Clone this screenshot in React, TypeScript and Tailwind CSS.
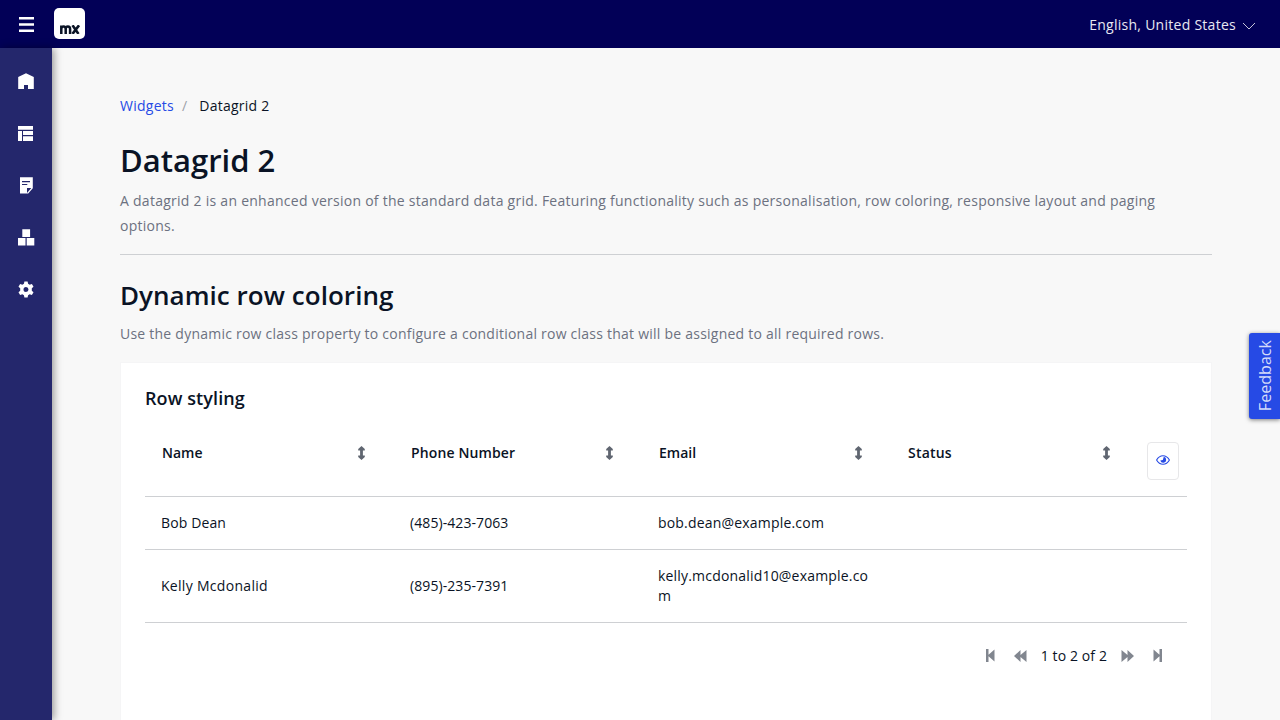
import type { ReactNode } from "react";

const columns = [
  { label: "Name", tracking: "" },
  { label: "Phone Number", tracking: "pl-[0.5px] tracking-[0.13px]" },
  { label: "Email", tracking: "" },
  { label: "Status", tracking: "pl-[0.5px] tracking-[0.2px]" },
];

const rows = [
  { name: "Bob Dean", tracking: "tracking-[0.12px]", phone: "(485)-423-7063", email: "bob.dean@example.com", status: "" },
  { name: "Kelly Mcdonalid", tracking: "tracking-[0.3px]", phone: "(895)-235-7391", email: "kelly.mcdonalid10@example.com", status: "" },
];

function NavItem({ label, children }: { label: string; children: ReactNode }) {
  return (
    <a href="#" aria-label={label} className="flex h-[52px] items-center justify-center text-white">
      <svg width="18" height="18" viewBox="0 0 18 18" fill="currentColor">
        {children}
      </svg>
    </a>
  );
}

function Sidebar() {
  return (
    <nav className="z-10 w-[52px] shrink-0 bg-[#24276c] pt-[7px] shadow-[2px_0_8px_rgba(0,0,0,0.4)]">
      <NavItem label="Home">
        <path d="M9 1.300 1.200 5V17H7v-4h4v4h5.800V5Z" />
      </NavItem>
      <NavItem label="Layout">
        <path d="M1 2h15v3.700H1ZM1 7h4v10H1ZM6 7h10v3.900H6ZM6 12.200h10V17H6Z" />
      </NavItem>
      <NavItem label="Notes">
        <path fillRule="evenodd" d="M3 1.200h12.800v11L11.200 17.500H3ZM5 5v1.200h8V5ZM5 7.900v1.200h5.300V7.900ZM10 12v5l4.300-5Z" />
      </NavItem>
      <NavItem label="Widgets">
        <path d="M5.300 1.300h7.800V9H5.300ZM1 10h7.500v7.500H1ZM9.700 10h7.600v7.500H9.700Z" />
      </NavItem>
      <NavItem label="Settings">
        <path
          transform="translate(0 .5)"
          fillRule="evenodd"
          d="M7.400 1h3.200l.5 2.300 1.500.9 2.300-.8 1.600 2.800-1.700 1.600v2.400l1.700 1.600-1.600 2.800-2.300-.8-1.500.9-.5 2.300H7.400l-.5-2.300-1.500-.9-2.300.8-1.600-2.800 1.700-1.600V7.800L1.500 6.200l1.600-2.800 2.300.8 1.500-.9ZM9 6.500a2.500 2.500 0 1 0 0 5 2.500 2.500 0 0 0 0-5Z"
        />
      </NavItem>
    </nav>
  );
}

function TopBar() {
  return (
    <header className="flex h-12 shrink-0 items-center bg-[#020057] text-[#e8e8f2]">
      <button aria-label="Toggle menu" className="flex w-[53px] items-center justify-center">
        <svg width="15" height="15" viewBox="0 0 15 15" fill="#fff">
          <path d="M0 0h15v2.400H0ZM0 6.300h15v2.400H0ZM0 12.600h15V15H0Z" />
        </svg>
      </button>
      <div className="-mt-px ml-px flex h-[31px] w-[31px] items-center justify-center rounded-[5px] bg-white">
        <svg width="20" height="9" viewBox="0 0 20 9" fill="none" stroke="#0a1325" className="mt-[11px]">
          <path strokeWidth="2.500" d="M1.300 9V.5M1.300 9V4Q1.300 1.500 3.500 1.500T5.700 4V9M5.700 9V4Q5.700 1.500 7.900 1.500T10.100 4V9" />
          <path strokeWidth="2.600" d="m12.500 .3 6 8.600M19 .3 12.500 8.900" />
        </svg>
      </div>
      <div className="mr-6 ml-auto flex items-center gap-[6px] pt-0.5 text-sm tracking-[0.27px]">
        English, United States
        <svg width="14" height="8" viewBox="0 0 14 8" fill="none" stroke="#c3c3d8" className="mt-px">
          <path d="m1 1 6 6 6-6" />
        </svg>
      </div>
    </header>
  );
}

function SortIcon() {
  return (
    <svg width="7" height="14" viewBox="0 0 7 14" fill="#606671" className="shrink-0">
      <path d="M3.500 0 6.800 3v1.500H4.900v5h1.900V11L3.500 14 .2 11V9.500h1.900v-5H.2V3Z" />
    </svg>
  );
}

function EyeIcon() {
  return (
    <svg width="14" height="10" viewBox="0 0 14 10" fill="none" className="mb-0.5">
      <path d="M.6 5Q3 .7 7 .7T13.400 5Q11 9.300 7 9.300T.6 5Z" stroke="#264ae5" strokeWidth="1.100" />
      <path d="M7.800 1.800A3 3 0 1 1 4.300 5.500l2.500-.6Z" fill="#264ae5" />
    </svg>
  );
}

function DataGrid() {
  return (
    <div className="mt-4">
      <div className="grid grid-cols-[repeat(4,1fr)_48px] border-b border-[#ced0d3]">
        {columns.map((c) => (
          <div key={c.label} className="flex h-[70px] items-start justify-between pt-[17px] pr-[29px] pl-[17px] font-semibold">
            <span className={`leading-5 ${c.tracking}`}>{c.label}</span>
            <span className="pt-[3px]">
              <SortIcon />
            </span>
          </div>
        ))}
        <div className="flex justify-center pt-4">
          <button
            aria-label="Column selector"
            className="flex h-[38px] w-8 items-center justify-center rounded-[4px] border border-[#e7e7e9]"
          >
            <EyeIcon />
          </button>
        </div>
      </div>
      {rows.map((r) => (
        <div key={r.name} className="grid grid-cols-[repeat(4,1fr)_48px] items-center border-b border-[#ced0d3] leading-5">
          <div className={`px-4 py-4 ${r.tracking}`}>{r.name}</div>
          <div className="py-4 pr-4 pl-[16.5px] tracking-[0.08px]">{r.phone}</div>
          <div className="px-4 py-4 tracking-[0.19px] break-all">{r.email}</div>
          <div className="px-4 py-4">{r.status}</div>
          <div />
        </div>
      ))}
      <div className="mt-[23px] flex h-5 items-center justify-end pr-[25px] text-[#81868f]">
        <svg width="9" height="13" viewBox="0 0 9 13" fill="currentColor" className="mb-px">
          <path d="M0 0h2.500v5.800L8.500.5v12L2.500 7.200V13H0Z" />
        </svg>
        <svg width="13" height="12" viewBox="0 0 13 12" fill="currentColor" className="mb-px ml-[19px]">
          <path d="M6.500 0v5L12.500 0v12l-6-5v5L0 6Z" />
        </svg>
        <span className="mx-[14px] tracking-[0.1px] text-[#0a1325]">1 to 2 of 2</span>
        <svg width="13" height="12" viewBox="0 0 13 12" fill="currentColor" className="mb-px">
          <path d="M6.500 0v5L.5 0v12l6-5v5L13 6Z" />
        </svg>
        <svg width="9" height="13" viewBox="0 0 9 13" fill="currentColor" className="mb-px ml-[19px]">
          <path d="M9 0H6.500v5.800L.5.500v12l6-5.300V13H9Z" />
        </svg>
      </div>
    </div>
  );
}

export default function App() {
  return (
    <div className="relative flex h-screen flex-col overflow-hidden bg-[#f8f8f8] font-['Open_Sans',sans-serif] text-sm text-[#0a1325]">
      <TopBar />
      <div className="flex min-h-0 flex-1">
        <Sidebar />
        <main className="min-w-0 flex-1 px-[68px] pt-12">
          <div className="flex leading-5 tracking-[0.25px]">
            <a href="#" className="text-[#264ae5]">
              Widgets
            </a>
            <span className="pr-3 pl-2 text-[#9da1a8]">/</span>
            <span>Datagrid 2</span>
          </div>
          <h1 className="mt-6 text-[31px] leading-10 font-semibold">Datagrid 2</h1>
          <p className="mt-2 border-b border-[#ced0d3] pb-4 leading-[25px] tracking-[0.262px] text-[#6c7180]">
            A datagrid 2 is an enhanced version of the standard data grid. Featuring functionality such as
            personalisation, row coloring, responsive layout and paging options.
          </p>
          <h2 className="mt-[23px] text-[26px] leading-[34px] font-semibold tracking-[0.04px]">Dynamic row coloring</h2>
          <p className="mt-[9px] leading-[25px] tracking-[0.235px] text-[#6c7180]">
            Use the dynamic row class property to configure a conditional row class that will be assigned to all
            required rows.
          </p>
          <section className="mt-4 h-[500px] border border-[#f5f5f6] bg-white px-6 pt-6">
            <h4 className="text-lg leading-[23px] font-semibold tracking-[0.1px]">Row styling</h4>
            <DataGrid />
          </section>
        </main>
      </div>
      <button className="absolute top-[333px] right-0 z-20 flex h-[86px] w-[31px] items-center justify-center rounded-l-[3px] bg-[#264ae5] pb-px text-base text-[#d4dbfa] shadow-[0_1px_4px_rgba(0,0,0,0.5)]">
        <span className="rotate-180 tracking-[0.05px] [writing-mode:vertical-rl]">Feedback</span>
      </button>
    </div>
  );
}
